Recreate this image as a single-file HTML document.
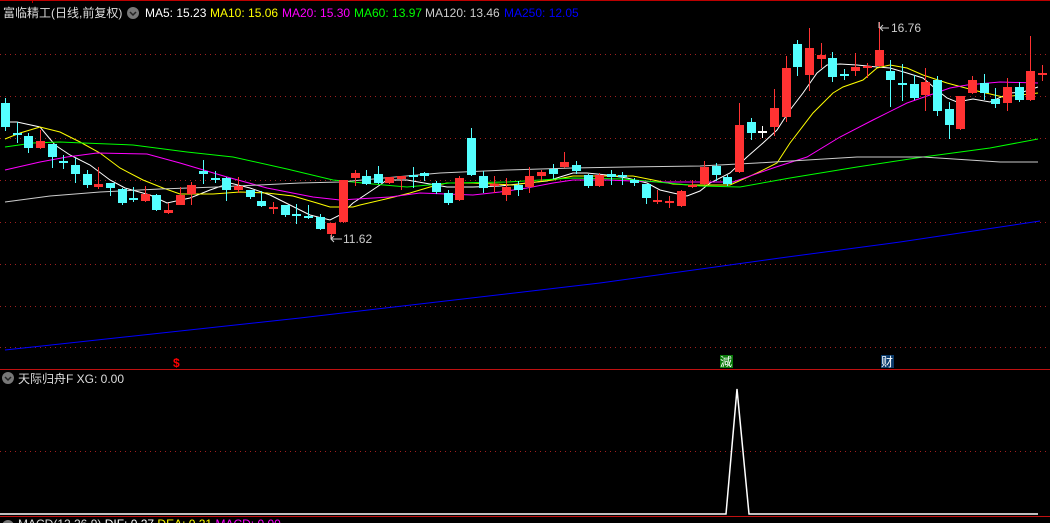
<!DOCTYPE html>
<html><head><meta charset="utf-8"><style>
html,body{margin:0;padding:0;background:#000;width:1050px;height:523px;overflow:hidden}
svg{display:block}
text{font-family:"Liberation Sans","Noto Sans CJK SC",sans-serif;font-size:12px}
</style></head><body>
<svg id="s" width="1050" height="523" xmlns="http://www.w3.org/2000/svg">
<rect width="1050" height="523" fill="#000"/>
<line x1="0" y1="0.5" x2="1050" y2="0.5" stroke="#b00" />
<line x1="32.5" y1="0" x2="32.5" y2="3" stroke="#b00"/>
<g stroke="#a02020" stroke-dasharray="1,4">
<line x1="0" y1="54.5" x2="1050" y2="54.5"/><line x1="0" y1="96.5" x2="1050" y2="96.5"/>
<line x1="0" y1="138.5" x2="1050" y2="138.5"/><line x1="0" y1="180.5" x2="1050" y2="180.5"/>
<line x1="0" y1="222.5" x2="1050" y2="222.5"/><line x1="0" y1="264.5" x2="1050" y2="264.5"/>
<line x1="0" y1="306.5" x2="1050" y2="306.5"/><line x1="0" y1="347.5" x2="1050" y2="347.5"/>
<line x1="0" y1="451.5" x2="1050" y2="451.5"/>
</g>
<line x1="0" y1="369.5" x2="1050" y2="369.5" stroke="#c01010"/>
<line x1="0" y1="516.5" x2="1050" y2="516.5" stroke="#c01010"/>
<g id="ma" fill="none" stroke-width="1"></g>
<g id="cd"></g>
<polyline points="0,514 726,514 737,389 749,514 1038,514" fill="none" stroke="#fff" stroke-width="1.5"/>
<text x="3" y="17" fill="#ddd">富临精工(日线,前复权)</text>
<circle cx="133" cy="13" r="6" fill="#777"/><path d="M130 12 L133 15 L136 12" stroke="#222" stroke-width="1.5" fill="none"/>
<text x="145" y="17" fill="#fff">MA5: 15.23</text>
<text x="210" y="17" fill="#ff0">MA10: 15.06</text>
<text x="282" y="17" fill="#f0f">MA20: 15.30</text>
<text x="354" y="17" fill="#0f0">MA60: 13.97</text>
<text x="425" y="17" fill="#ccc">MA120: 13.46</text>
<text x="504" y="17" fill="#00f">MA250: 12.05</text>
<text x="343" y="243" fill="#ccc">11.62</text>
<path d="M342 239 H331 M334 236 L331 239 L334 242 M331 235 V239" stroke="#ccc" fill="none"/>
<text x="891" y="32" fill="#ccc">16.76</text>
<path d="M889 28 H880 M883 25 L880 28 L883 31 M879 22 V28" stroke="#ccc" fill="none"/>
<text x="173" y="367" fill="#f00" font-weight="bold" style="font-size:12px">$</text>
<rect x="720" y="355" width="13" height="13" fill="#0a7a0a"/><text x="720" y="366" fill="#fff" style="font-size:12px">減</text>
<rect x="881" y="355" width="13" height="13" fill="#0a3a6a"/><text x="881" y="366" fill="#fff" style="font-size:12px">财</text>
<circle cx="8" cy="378" r="6" fill="#777"/><path d="M5 377 L8 380 L11 377" stroke="#222" stroke-width="1.5" fill="none"/>
<text x="18" y="383" fill="#ddd">天际归舟F  XG: 0.00</text>
<circle cx="8" cy="526" r="6" fill="#777"/>
<text x="18" y="528" fill="#ddd">MACD(12,26,9) <tspan fill="#fff">DIF: 0.27</tspan> <tspan fill="#ff0">DEA: 0.21</tspan> <tspan fill="#f0f">MACD: 0.00</tspan></text>
</svg>
<script>
var C=[
['c',103,127,98,130],['c',133,133,122,142],['c',136,148,133,152],['r',141,148,130,148],['c',144,157,144,167],['c',161,161,155,168],['c',165,174,158,182],['c',174,185,170,187],['r',184,187,167,188],['c',183,188,183,195],
['c',189,203,188,204],['c',198,198,187,201],['r',194,201,186,201],['c',195,210,194,210],['r',210,213,203,213],['r',195,205,187,204],['r',185,194,182,204],['c',171,174,160,183],['c',178,180,171,182],['c',178,190,177,200],
['r',186,190,177,192],['c',190,197,190,198],['c',201,206,191,206],['r',207,207,202,213],['c',205,215,205,216],['c',214,214,204,223],['c',216,216,205,218],['c',217,229,214,229],['r',223,234,223,238],['r',180,222,180,222],
['r',173,178,170,185],['c',176,184,170,184],['c',174,183,166,183],['r',177,183,177,183],['r',176,179,176,189],['c',175,176,167,187],['c',173,176,172,180],['c',183,192,181,193],['c',193,203,190,204],['r',178,200,176,200],
['c',138,175,128,175],['c',176,188,171,192],['r',184,186,176,192],['r',187,195,178,200],['c',185,190,181,195],['r',176,187,167,192],['r',172,176,170,180],['c',169,174,164,178],['r',162,167,152,167],['c',165,171,161,173],
['c',175,186,174,187],['r',175,186,173,186],['c',174,177,170,184],['c',175,177,172,184],['c',180,183,178,185],['c',184,198,184,203],['r',200,202,190,203],['r',201,201,196,207],['r',191,206,190,206],['r',185,186,180,187],
['r',167,184,161,184],['c',166,175,163,180],['c',177,184,175,185],['r',125,172,103,172],['c',122,133,118,139],['w',131,131,126,137],['r',108,127,89,135],['r',68,117,56,121],['c',44,67,40,75],['r',48,75,28,90],
['r',55,59,43,67],['c',58,77,52,81],['c',74,74,69,79],['r',67,71,53,75],['r',66,68,63,77],['r',50,66,22,66],['c',71,80,60,106],['c',83,83,64,100],['c',84,98,75,99],['r',82,95,68,110],
['c',80,111,76,115],['c',109,125,102,138],['r',96,129,96,129],['r',80,93,76,93],['c',83,93,74,99],['c',99,104,88,107],['r',87,103,78,110],['c',87,100,82,101],['r',71,100,36,100],['r',73,75,65,80]];
var col={c:'#54ffff',r:'#ff3232',w:'#ffffff'},h='';
C.forEach(function(d,i){var x=Math.round(5+i*11.65),c=col[d[0]];
h+='<line x1="'+(x+.5)+'" y1="'+d[3]+'" x2="'+(x+.5)+'" y2="'+(d[4]+1)+'" stroke="'+c+'"/>';
var t=Math.min(d[1],d[2]),b=Math.max(d[1],d[2]);if(b-t<2){h+='<rect x="'+(x-4)+'" y="'+t+'" width="9" height="2" fill="'+c+'"/>'}else h+='<rect x="'+(x-4)+'" y="'+t+'" width="9" height="'+(b-t)+'" fill="'+c+'"/>';});
document.getElementById('cd').innerHTML=h;
var M={
'#fff':'5,122 17,122 40,127 55,145 70,155 90,165 110,180 125,188 150,195 167,203 190,198 210,190 230,183 250,188 270,195 290,205 310,215 330,220 340,215 353,203 377,187 387,180 407,180 447,187 473,187 500,186 527,183 547,181 560,177 573,173 587,173 607,175 627,178 647,183 660,190 673,193 687,196 700,191 710,183 730,173 747,157 763,143 777,130 790,110 803,93 817,73 827,65 840,64 857,65 877,67 890,68 907,73 923,78 937,90 947,98 957,102 973,99 990,102 1010,93 1023,92 1038,87',
'#ff0':'5,139 20,133 40,127 60,132 80,142 100,153 120,168 143,180 163,188 180,194 213,194 240,192 267,193 293,196 317,203 330,207 353,207 360,205 390,198 410,193 430,187 447,183 473,183 513,185 527,183 553,180 573,176 600,176 633,176 653,180 673,184 690,185 730,185 757,173 777,163 790,143 813,113 833,93 843,87 863,80 877,68 890,65 907,68 923,75 947,83 973,90 1003,97 1038,93',
'#f0f':'5,170 40,162 67,157 97,153 147,154 180,163 227,177 267,188 313,197 340,200 390,197 420,193 473,195 500,192 527,188 553,183 573,180 607,180 660,182 700,182 733,182 773,168 807,157 840,137 873,120 907,103 950,88 967,85 1000,82 1038,83',
'#0f0':'5,147 33,143 60,142 83,143 133,145 187,152 233,157 287,169 333,180 373,184 407,187 450,183 507,182 573,178 623,179 657,182 700,186 740,187 790,178 857,167 923,157 990,148 1038,139',
'#ccc':'5,202 50,196 100,192 160,189 217,187 300,183 340,182 440,173 507,170 573,168 627,167 700,166 757,163 857,157 923,157 1000,162 1038,162',
'#0000ff':'5,350 300,318 600,283 780,258 900,242 1040,221'};
var g='';for(var k in M)g+='<polyline points="'+M[k]+'" stroke="'+k+'"/>';
document.getElementById('ma').innerHTML=g;
</script>
</body></html>
